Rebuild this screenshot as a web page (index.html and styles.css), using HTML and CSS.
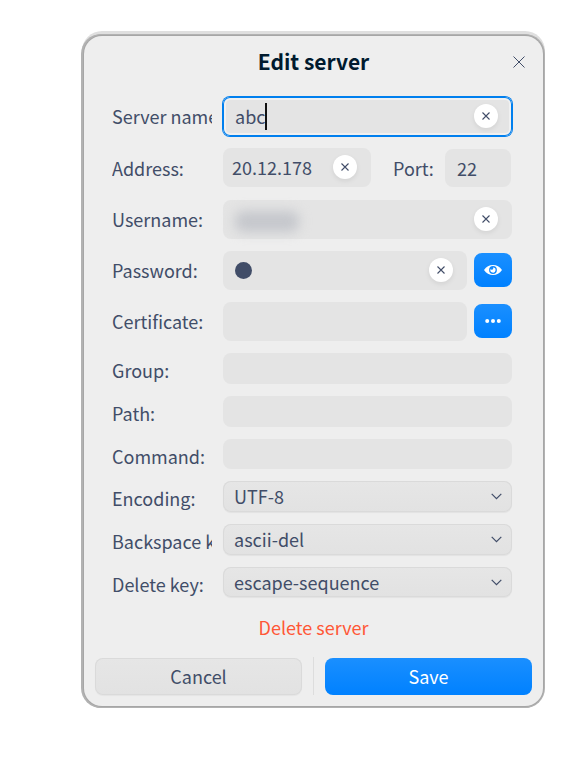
FILE: index.html
```html
<!DOCTYPE html>
<html lang="en">
<head>
<meta charset="utf-8">
<title>Edit server</title>
<link rel="stylesheet" href="styles.css">
</head>
<body>
<svg class="symbols" aria-hidden="true">
  <symbol id="cross" viewBox="0 0 8 8"><path d="M.5 .5L7.5 7.5M7.5 .5L.5 7.5"/></symbol>
  <symbol id="chevron" viewBox="0 0 11 7"><path d="M.7 .8L5.5 5.6L10.3 .8"/></symbol>
</svg>
<main class="dialog">
  <header class="titlebar">
    <h1>Edit server</h1>
    <svg class="close" viewBox="0 0 12 12"><path d="M.5 .5L11.5 11.5M11.5 .5L.5 11.5"/></svg>
  </header>
  <form class="form">
    <div class="row tall"><label>Server name:</label><div class="field focused"><span class="value">abc</span><i class="caret"></i><b class="clear"><svg><use href="#cross"/></svg></b></div></div>
    <div class="row tall host"><label>Address:</label><div class="field address"><span class="value">20.12.178</span><b class="clear"><svg><use href="#cross"/></svg></b></div><label class="port-label">Port:</label><div class="field port"><span class="value">22</span></div></div>
    <div class="row tall"><label>Username:</label><div class="field"><i class="redacted"></i><b class="clear"><svg><use href="#cross"/></svg></b></div></div>
    <div class="row tall"><label>Password:</label><div class="field"><i class="bullet"></i><b class="clear"><svg><use href="#cross"/></svg></b></div><div class="tool"><svg class="eye" viewBox="0 0 18 10"><path fill-rule="evenodd" d="M0 5C2.300 1.700 5.300 0 9 0S15.700 1.700 18 5C15.700 8.300 12.700 10 9 10S2.300 8.300 0 5ZM9 1.100A3.900 3.900 0 1 0 9 8.900A3.900 3.900 0 1 0 9 1.100Z"/><path d="M9 2.400A2.600 2.600 0 1 1 6.600 4A1.300 1.300 0 0 0 9 2.400Z"/></svg></div></div>
    <div class="row tall"><label>Certificate:</label><div class="field"></div><div class="tool"><svg class="dots" viewBox="0 0 16 4"><circle cx="2.200" cy="2" r="2"/><circle cx="8" cy="2" r="2"/><circle cx="13.800" cy="2" r="2"/></svg></div></div>
    <div class="row"><label>Group:</label><div class="field"></div></div>
    <div class="row"><label>Path:</label><div class="field"></div></div>
    <div class="row short"><label>Command:</label><div class="field"></div></div>
    <div class="row"><label>Encoding:</label><div class="field select"><span class="value">UTF-8</span><svg class="chevron"><use href="#chevron"/></svg></div></div>
    <div class="row"><label>Backspace key:</label><div class="field select"><span class="value">ascii-del</span><svg class="chevron"><use href="#chevron"/></svg></div></div>
    <div class="row short"><label>Delete key:</label><div class="field select"><span class="value">escape-sequence</span><svg class="chevron"><use href="#chevron"/></svg></div></div>
  </form>
  <div class="delete">Delete server</div>
  <footer class="actions">
    <div class="button">Cancel</div>
    <i class="divider"></i>
    <div class="button primary">Save</div>
  </footer>
</main>
</body>
</html>
```
FILE: styles.css
```css
* { box-sizing: border-box; }
body {
  margin: 0;
  min-height: 100vh;
  padding: 36px 0 0 84px;
  background: #fff;
  color: #414d68;
  font: 400 18px/28px "Noto Sans CJK SC", "Noto Sans", sans-serif;
}
.symbols { position: absolute; width: 0; height: 0; }
svg { display: block; fill: none; stroke: #414d68; }
.dialog {
  width: 459px;
  height: 670px;
  border-radius: 18px;
  background: #eee;
  box-shadow: 0 0 0 1px #a6a6a6, -1px 0 0 2px #b2b2b2, 0 0 0 2px #b2b2b2, 0 -3px 0 2px #dfdfdf;
}
.titlebar { position: relative; height: 61px; }
h1 {
  margin: 0;
  padding-top: 11px;
  text-align: center;
  font-size: 21px;
  line-height: 28px;
  font-weight: 700;
  color: #001a2e;
}
.close { position: absolute; left: 428.500px; top: 19.500px; width: 12px; height: 12px; stroke-width: 1; }
.form { display: flex; flex-direction: column; gap: 12px; padding: 0 31px 0 28px; }
.row { display: flex; height: 31px; }
.row.short { height: 30px; }
.row.tall { height: 39px; }
.row.host { margin-bottom: 1px; }
label {
  flex: none;
  width: 100px;
  margin-right: 11px;
  padding-top: 3px;
  overflow: hidden;
  white-space: nowrap;
}
.tall label { padding-top: 5px; }
.host label { padding-top: 6px; }
.field {
  flex: 1;
  display: flex;
  align-items: center;
  padding: 0 14px 0 12px;
  border-radius: 8px;
  background: #e4e4e4;
}
.value { white-space: nowrap; }
.address .value { margin-top: -1px; }
.focused {
  border-radius: 7px;
  box-shadow: 0 0 0 1px #007fee, inset 0 0 0 1px #007fee, inset 0 0 0 3px #f0f0f0;
}
.focused .value { margin-top: -2px; }
.caret { width: 2px; height: 27px; background: #111; }
.clear {
  display: flex;
  align-items: center;
  justify-content: center;
  width: 24px;
  height: 24px;
  margin: -1px 0 0 auto;
  border-radius: 50%;
  background: #fff;
  box-shadow: 0 2px 5px rgba(0, 0, 0, .08);
}
.clear svg { width: 8px; height: 8px; stroke-width: 1.1; }
.address { flex: 0 0 148px; padding-left: 9px; }
.port-label { width: 42px; margin: 0 10px 0 22px; }
.port { margin: 1px 1px 0 0; }
.redacted { width: 64px; height: 21px; margin: 4px 0 0; border-radius: 8px; background: #c5c7cc; filter: blur(6px); }
.bullet { width: 17px; height: 17px; border-radius: 50%; background: #414d68; }
.tool {
  display: flex;
  align-items: center;
  justify-content: center;
  width: 38px;
  height: 34px;
  margin: 2px 0 0 7px;
  border-radius: 8px;
  background: linear-gradient(#1a8fff, #0081ff);
}
.tool svg { fill: #fff; stroke: none; }
.eye { width: 18px; height: 10px; }
.dots { width: 16px; height: 4px; }
.select {
  justify-content: space-between;
  padding: 0 10px 0 11px;
  background: linear-gradient(#e6e6e6, #e2e2e2);
  box-shadow: inset 0 0 0 1px #dadada, 0 1px 1px rgba(0, 0, 0, .05);
}
.select .value { margin-top: -1px; }
.short .select .value { margin-top: 0; }
.chevron { width: 11px; height: 7px; stroke-width: 1.2; }
.delete { margin-top: 16px; text-align: center; color: #ff5736; }
.actions { display: flex; justify-content: space-between; margin-top: 16px; padding: 0 11px; }
.button {
  width: 207px;
  height: 37px;
  margin-top: 1px;
  border-radius: 8px;
  text-align: center;
  line-height: 37px;
  background: linear-gradient(#e6e6e6, #e2e2e2);
  box-shadow: inset 0 0 0 1px #dadada, 0 1px 1px rgba(0, 0, 0, .04);
}
.primary { color: #fff; background: linear-gradient(#1a8fff, #0081ff); box-shadow: none; }
.divider { width: 1px; height: 38px; background: #ddd; }
```
